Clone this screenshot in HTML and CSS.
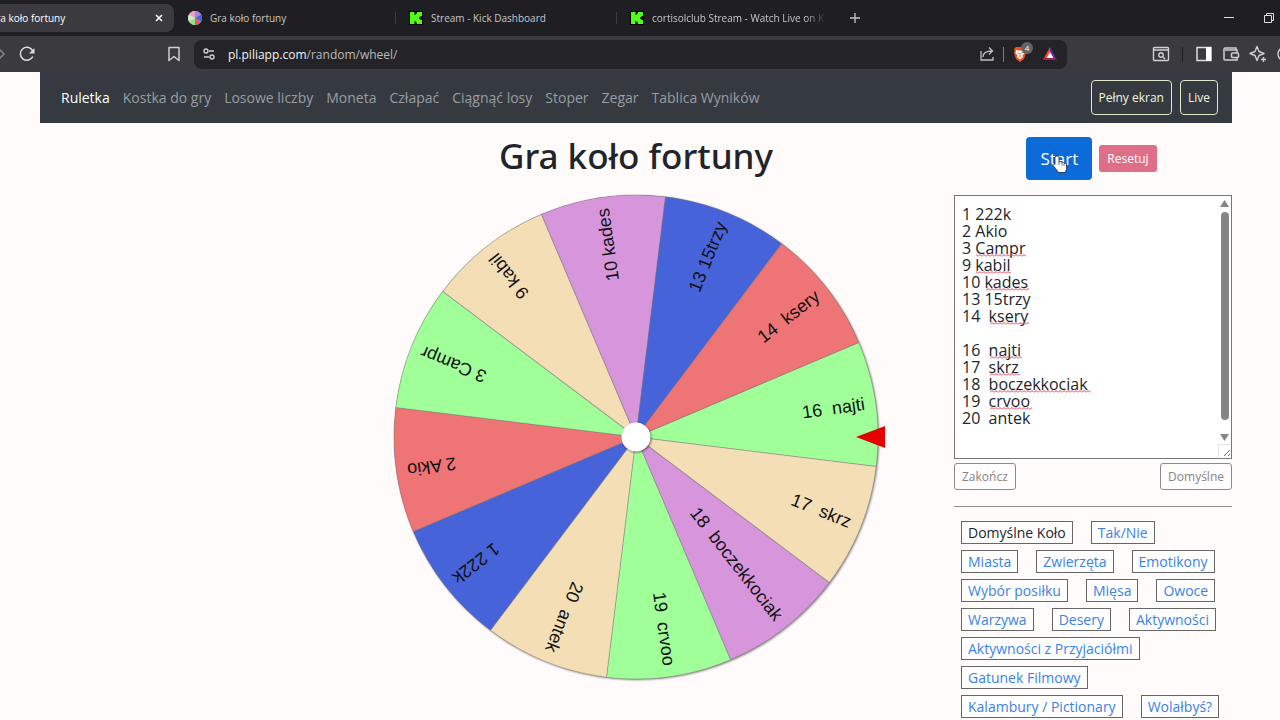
FILE: index.html
```html
<!DOCTYPE html>
<html lang="pl">
<head>
    <meta charset="UTF-8">
    <meta name="viewport" content="width=device-width, initial-scale=1.0">
    <title>Gra koło fortuny</title>
    <link rel="stylesheet" href="styles.css">
</head>
<body>
    <div class="browser">
        <div class="tabs">
            <div class="tab active">
                <svg class="favicon" viewBox="0 0 14 14"><circle cx="7" cy="7" r="7" fill="#d795dc"/></svg>
                <span class="tab-title">Gra koło fortuny</span>
                <button class="tab-close" aria-label="Zamknij kartę">
                    <svg width="8" height="8" viewBox="0 0 8 8"><path d="M1 1l6 6M7 1L1 7" stroke="#fff" stroke-width="1.600"/></svg>
                </button>
            </div>
            <div class="tab">
                <svg class="favicon" viewBox="0 0 14 14">
                    <circle cx="7" cy="7" r="7" fill="#e9c9c9"/>
                    <path d="M7 7L7 0A7 7 0 0 1 13 3.500z" fill="#9b86dd"/>
                    <path d="M7 7L13 3.500A7 7 0 0 1 13 10.500z" fill="#4663da"/>
                    <path d="M7 7L13 10.500A7 7 0 0 1 7 14z" fill="#e8575f"/>
                    <path d="M7 7L7 14A7 7 0 0 1 1 10.500z" fill="#8fe08e"/>
                    <path d="M7 7L1 10.500A7 7 0 0 1 1 3.500z" fill="#c9f0b8"/>
                    <path d="M7 7L1 3.500A7 7 0 0 1 7 0z" fill="#ee9fc8"/>
                </svg>
                <span class="tab-title">Gra koło fortuny</span>
            </div>
            <div class="tab">
                <svg class="favicon" viewBox="0 0 14 14"><rect width="14" height="14" fill="#000"/><path d="M1 1h4.500v3h1V2.500H8V1h5v4h-1.500v1.200H10v1.600h1.500V9H13v4H8v-1.500H6.500V10h-1v3H1z" fill="#53fc18"/></svg>
                <span class="tab-title">Stream - Kick Dashboard</span>
            </div>
            <div class="tab">
                <svg class="favicon" viewBox="0 0 14 14"><rect width="14" height="14" fill="#000"/><path d="M1 1h4.500v3h1V2.500H8V1h5v4h-1.500v1.200H10v1.600h1.500V9H13v4H8v-1.500H6.500V10h-1v3H1z" fill="#53fc18"/></svg>
                <span class="tab-title fade">cortisolclub Stream - Watch Live on K</span>
            </div>
            <button class="new-tab" aria-label="Nowa karta">
                <svg width="12" height="12" viewBox="0 0 12 12"><path d="M6 1v10M1 6h10" stroke="#c8c8cb" stroke-width="1.300"/></svg>
            </button>
            <div class="window-buttons">
                <button aria-label="Minimalizuj"><svg width="12" height="12" viewBox="0 0 12 12"><path d="M1 5.500h10" stroke="#ddd"/></svg></button>
                <button aria-label="Przywróć"><svg width="12" height="12" viewBox="0 0 12 12"><path d="M1.500 3.500h7v7h-7zM3.500 3V1.500h7v7H9" fill="none" stroke="#ddd"/></svg></button>
            </div>
        </div>
        <div class="toolbar">
            <button class="forward" aria-label="Dalej"><svg width="10" height="16" viewBox="0 0 10 16"><path d="M3 3l5 5-5 5" fill="none" stroke="#88888c" stroke-width="1.500"/></svg></button>
            <button class="reload" aria-label="Odśwież"><svg width="18" height="18" viewBox="0 0 18 18"><path d="M14.500 5.500A6.500 6.500 0 1 0 14.800 11.500" fill="none" stroke="#ddd" stroke-width="1.500"/><path d="M16.500 3v5.500h-5.500z" fill="#ddd"/></svg></button>
            <button class="bookmark" aria-label="Zakładka"><svg width="14" height="18" viewBox="0 0 14 18"><path d="M2 2.500h10v13l-5-4-5 4z" fill="none" stroke="#d0d0d3" stroke-width="1.500" stroke-linejoin="round"/></svg></button>
            <div class="address">
                <svg width="14" height="14" viewBox="0 0 14 14" fill="none" stroke="#d0d0d3" stroke-width="1.400"><circle cx="4" cy="4" r="2"/><path d="M7 4h5M2 10h5"/><circle cx="10" cy="10" r="2"/></svg>
                <span class="url">pl.piliapp.com<span class="path">/random/wheel/</span></span>
                <svg width="16" height="16" viewBox="0 0 16 16" fill="none" stroke="#c0c0c3" stroke-width="1.300"><path d="M2 5v9h12v-3M4 11c0-4 3-6 9-6M10 1.500L13.500 5 10 8.500"/></svg>
                <span class="divider light"></span>
                <span class="shield">
                    <svg width="16" height="16" viewBox="0 0 16 16"><path d="M4 1h8l2 2-.5 2 .5 2-2 6-4 3-4-3-2-6 .5-2L2 3z" fill="#f0501e"/><path d="M4 4l2 .5h4l2-.5.5 3-2 2.500.5 1.500-3 2.500L5 11l.5-1.500-2-2.500z" fill="#fff"/><path d="M5 6.500l2 1M11 6.500l-2 1M8 7v3M6.500 11.500L8 10.500l1.500 1" stroke="#f0501e" stroke-width=".8" fill="none"/></svg>
                    <span class="badge">4</span>
                </span>
                <svg width="16" height="16" viewBox="0 0 16 16"><path d="M8 1L1 14l7-5z" fill="#ff4724"/><path d="M1 14h14l-7-5z" fill="#9e1f63"/><path d="M8 1l7 13-7-5z" fill="#662d91"/><path d="M8 6l-3.500 6h7z" fill="#fff"/></svg>
            </div>
            <div class="actions">
                <svg width="18" height="18" viewBox="0 0 18 18" fill="none" stroke="#d0d0d3" stroke-width="1.400"><rect x="1.500" y="2.500" width="15" height="13" rx="1"/><path d="M2 5h14M11 12l2 2"/><circle cx="9" cy="10" r="2.200"/></svg>
                <span class="divider"></span>
                <svg width="18" height="18" viewBox="0 0 18 18"><rect x="2" y="2.500" width="14" height="13" fill="none" stroke="#e0e0e2" stroke-width="1.500"/><path d="M11 2h5v14h-5z" fill="#fff"/></svg>
                <svg width="18" height="18" viewBox="0 0 18 18" fill="none" stroke="#d0d0d3" stroke-width="1.500"><path d="M14 5V3H3a1.500 1.500 0 0 0-1 2v9a1 1 0 0 0 1 1h12V5H3"/><rect x="9.500" y="8" width="7" height="4.500" rx="1" fill="#3b3a3f"/></svg>
                <svg width="18" height="18" viewBox="0 0 18 18" fill="none" stroke="#d0d0d3" stroke-width="1.400" stroke-linejoin="round"><path d="M8 1.500l2 5 5 2-5 2-2 5-2-5-5-2 5-2zM14.500 12v5M12 14.500h5"/></svg>
                <svg width="18" height="18" viewBox="0 0 18 18" fill="none" stroke="#d0d0d3" stroke-width="1.400"><circle cx="9" cy="9" r="7"/></svg>
            </div>
        </div>
    </div>

    <div class="container">
        <nav class="navbar">
            <a class="current" href="#">Ruletka</a>
            <a href="#">Kostka do gry</a>
            <a href="#">Losowe liczby</a>
            <a href="#">Moneta</a>
            <a href="#">Człapać</a>
            <a href="#">Ciągnąć losy</a>
            <a href="#">Stoper</a>
            <a href="#">Zegar</a>
            <a href="#">Tablica Wyników</a>
            <div class="nav-buttons">
                <button>Pełny ekran</button>
                <button>Live</button>
            </div>
        </nav>

        <main class="main">
            <section class="game">
                <h1>Gra koło fortuny</h1>
                <svg class="wheel" viewBox="-250 -250 500 500">
                    <defs>
                        <path id="slice" d="M0 0L233.750-62.630A242 242 0 0 1 233.750 62.630z"/>
                    </defs>
                    <circle class="disc" r="242"/>
                    <g transform="rotate(-8)"><use href="#slice" fill="#a0ff98"/><text x="231" y="-1">16  najti</text></g>
                    <g transform="rotate(22)"><use href="#slice" fill="#f3deb5"/><text x="231" y="-1">17  skrz</text></g>
                    <g transform="rotate(52)"><use href="#slice" fill="#d795dc"/><text x="231" y="-1">18  boczekkociak</text></g>
                    <g transform="rotate(82)"><use href="#slice" fill="#a0ff98"/><text x="231" y="-1">19  crvoo</text></g>
                    <g transform="rotate(112)"><use href="#slice" fill="#f3deb5"/><text x="231" y="-1">20  antek</text></g>
                    <g transform="rotate(142)"><use href="#slice" fill="#4663da"/><text x="231" y="-1">1 222k</text></g>
                    <g transform="rotate(172)"><use href="#slice" fill="#ef7476"/><text x="231" y="-1">2 Akio</text></g>
                    <g transform="rotate(202)"><use href="#slice" fill="#a0ff98"/><text x="231" y="-1">3 Campr</text></g>
                    <g transform="rotate(232)"><use href="#slice" fill="#f3deb5"/><text x="231" y="-1">9 kabil</text></g>
                    <g transform="rotate(262)"><use href="#slice" fill="#d795dc"/><text x="231" y="-1">10 kades</text></g>
                    <g transform="rotate(292)"><use href="#slice" fill="#4663da"/><text x="231" y="-1">13 15trzy</text></g>
                    <g transform="rotate(322)"><use href="#slice" fill="#ef7476"/><text x="231" y="-1">14  ksery</text></g>
                    <circle class="hub" r="14.500"/>
                    <path class="pointer" d="M220 0L249-11V11z"/>
                </svg>
            </section>

            <aside class="side">
                <div class="controls">
                    <button class="start">Start
                        <svg class="hand" width="16" height="20" viewBox="0 0 16 20"><path d="M5 2c1.500 0 2 .7 2 2v4l1-.5c1 0 1.500.5 2 1 1-.3 1.700.1 2 .8 1.500-.3 2.500.4 2.500 1.700v3.500c0 1.500-1 2-1 4H6c0-1.500-1.500-2.500-2.500-4L1 11.500c-.5-1 1-2 2-1V4c0-1.300.5-2 2-2z" fill="#fff" stroke="#223" stroke-width=".8"/><path d="M7 8v3M10 9v2.500M12 10v2" stroke="#445" stroke-width=".8"/></svg>
                    </button>
                    <button class="reset">Resetuj</button>
                </div>
                <div class="editor">
                    <textarea class="names" aria-label="Lista" spellcheck="false">1 222k
2 Akio
3 Campr
9 kabil
10 kades
13 15trzy
14  ksery

16  najti
17  skrz
18  boczekkociak
19  crvoo
20  antek</textarea>
                    <svg class="marks" width="278" height="264" viewBox="0 0 278 264">
                        <defs>
                            <!-- one tile per text line, wave under the baseline -->
                            <pattern id="wave" y="11" width="4" height="17" patternUnits="userSpaceOnUse"><path d="M0 16.500L2 14.500L4 16.500" fill="none" stroke="#dc3a56"/></pattern>
                        </defs>
                        <g fill="url(#wave)">
                            <rect x="22" y="45" width="50" height="17"/>
                            <rect x="22" y="62" width="35" height="17"/>
                            <rect x="32" y="79" width="43" height="17"/>
                            <rect x="36" y="113" width="39" height="17"/>
                            <rect x="36" y="147" width="32" height="17"/>
                            <rect x="36" y="164" width="30" height="17"/>
                            <rect x="36" y="181" width="101" height="17"/>
                            <rect x="36" y="198" width="42" height="17"/>
                        </g>
                        <path d="M266 12l4.500-7 4.500 7zM266 239l4.500 7 4.500-7z" fill="#858585"/>
                        <rect x="267" y="17" width="8" height="208" rx="4" fill="#858585"/>
                        <path d="M264.500 263v-13.500H277" fill="none" stroke="#e3e3e3"/>
                        <path d="M270 261l6-6M274 261l2-2" stroke="#777"/>
                    </svg>
                </div>
                <div class="editor-buttons">
                    <button>Zakończ</button>
                    <button>Domyślne</button>
                </div>
                <div class="presets">
                    <a class="chosen" href="#">Domyślne Koło</a>
                    <a href="#">Tak/Nie</a>
                    <a href="#">Miasta</a>
                    <a href="#">Zwierzęta</a>
                    <a href="#">Emotikony</a>
                    <a href="#">Wybór posiłku</a>
                    <a href="#">Mięsa</a>
                    <a href="#">Owoce</a>
                    <a href="#">Warzywa</a>
                    <a href="#">Desery</a>
                    <a href="#">Aktywności</a>
                    <a href="#">Aktywności z Przyjaciółmi</a>
                    <a href="#">Gatunek Filmowy</a>
                    <a href="#">Kalambury / Pictionary</a>
                    <a href="#">Wolałbyś?</a>
                </div>
            </aside>
        </main>
    </div>
</body>
</html>
```
FILE: styles.css
```css
* {
    box-sizing: border-box;
}
body {
    margin: 0;
    font-family: "Open Sans", "Noto Sans", sans-serif;
    font-size: 14px;
    color: #212529;
    background: #fffbfa;
    overflow: hidden;
}
button {
    font-family: inherit;
    cursor: pointer;
}
a {
    text-decoration: none;
}

/* browser window */
.browser {
    color: #c8c8cb;
    background: #1f1e22;
}
.browser button {
    display: flex;
    padding: 0;
    border: none;
    background: none;
}
.tabs {
    display: flex;
    align-items: center;
    height: 36px;
    margin-left: -47px;
}
.tab {
    display: flex;
    align-items: center;
    flex: none;
    gap: 8px;
    width: 221px;
    height: 28px;
    padding: 0 11px 0 14px;
    font-size: 10px;
}
.tab + .tab + .tab {
    background: linear-gradient(#3c3b40, #3c3b40) left center / 1px 12px no-repeat;
}
.tab.active {
    color: #fff;
    background: #3b3a3f;
    border-radius: 8px;
}
.favicon {
    flex: none;
    width: 14px;
    height: 14px;
}
.tab-title {
    flex: 1;
    overflow: hidden;
    white-space: nowrap;
}
.fade {
    -webkit-mask-image: linear-gradient(to right, #000 88%, transparent);
    mask-image: linear-gradient(to right, #000 88%, transparent);
}
.new-tab {
    margin-left: 12px;
}
.window-buttons {
    display: flex;
    gap: 28px;
    margin-left: auto;
    padding-right: 5px;
}
.toolbar {
    display: flex;
    align-items: center;
    height: 36px;
    background: #3b3a3f;
}
.forward {
    margin-left: -4px;
}
.reload {
    margin-left: 12px;
}
.bookmark {
    margin-left: 131px;
}
.address {
    display: flex;
    flex: 1;
    align-items: center;
    gap: 12px;
    height: 29px;
    margin-left: 13px;
    padding: 0 9px 0 8px;
    border-radius: 8px;
    background: #242327;
}
.url {
    flex: 1;
    font-size: 12px;
    color: #f1f1f3;
}
.path {
    color: #b9b9bd;
}
.divider {
    width: 1px;
    height: 15px;
    background: #1f1e22;
}
.light {
    margin: 0 -4px;
    background: #7b7b80;
}
.shield {
    position: relative;
    display: flex;
    margin-right: 2px;
}
.badge {
    position: absolute;
    top: -4px;
    right: -5px;
    width: 12px;
    border-radius: 6px;
    font-size: 8px;
    line-height: 12px;
    text-align: center;
    color: #fff;
    background: #63636c;
}
.actions {
    display: flex;
    align-items: center;
    gap: 9px;
    margin-left: 85px;
    margin-right: -14px;
}
.actions .divider {
    margin: 0 3px;
}

/* page */
.container {
    margin: 0 48px 0 40px;
}
.navbar {
    display: flex;
    align-items: center;
    gap: 13px;
    height: 51px;
    padding: 0 14px 0 21px;
    background: #343a40;
}
.navbar a {
    color: #999da0;
}
.navbar .current {
    color: #fff;
}
.nav-buttons {
    display: flex;
    gap: 8px;
    margin-left: auto;
}
.nav-buttons button {
    height: 35px;
    padding: 0 7px;
    border: 1px solid #dfe8c8;
    border-radius: 4px;
    font-size: 12px;
    color: #f4f7df;
    background: transparent;
}
.main {
    display: grid;
    grid-template-columns: 278px 1fr 278px;
}
.game {
    grid-column: 2;
    display: flex;
    flex-direction: column;
    align-items: center;
}
.game h1 {
    margin: 8px 0 6px;
    font-family: "Noto Sans", "Open Sans", sans-serif;
    font-size: 35px;
    font-weight: 500;
    line-height: 50px;
}
.wheel {
    width: 500px;
    height: 500px;
}
.wheel use {
    stroke: #77777a;
    stroke-opacity: 0.4;
    stroke-width: 1px;
}
.wheel text {
    font-family: "Liberation Sans", Arial, sans-serif;
    font-size: 18px;
    fill: #111;
    text-anchor: end;
    dominant-baseline: central;
    white-space: pre;
}
.disc {
    fill: #777;
    filter: drop-shadow(1px 1px 1px rgba(0, 0, 0, 0.5));
}
.hub {
    fill: #fff;
    filter: drop-shadow(1px 1px 1px rgba(0, 0, 0, 0.5));
}
.pointer {
    fill: #e60000;
}
.controls {
    display: flex;
    align-items: center;
    justify-content: center;
    gap: 7px;
    height: 43px;
    margin: 14px 3px 15px 0;
}
.start {
    position: relative;
    height: 43px;
    padding: 0 14px;
    border: none;
    border-radius: 4px;
    font-size: 17px;
    color: #fff;
    background: #0b6bd8;
}
.hand {
    position: absolute;
    top: 17px;
    left: 26px;
}
.reset {
    height: 27px;
    padding: 0 8px;
    border: none;
    border-radius: 3px;
    font-size: 12px;
    color: #fff;
    background: #df6f88;
}
.editor {
    position: relative;
    height: 264px;
}
.names {
    display: block;
    width: 100%;
    height: 100%;
    padding: 10px 20px 8px 7px;
    border: 1px solid #777;
    font-family: inherit;
    font-size: 16px;
    line-height: 17px;
    color: #212529;
    background: #fff;
    resize: none;
    overflow: hidden;
}
.marks {
    position: absolute;
    top: 0;
    left: 0;
    pointer-events: none;
}
.editor-buttons {
    display: flex;
    justify-content: space-between;
    padding: 4px 0 16px;
    border-bottom: 1px solid #8d8b8b;
}
.editor-buttons button {
    height: 27px;
    padding: 0 7px;
    border: 1px solid #8a8a8a;
    border-radius: 3px;
    font-size: 12px;
    color: #858585;
    background: #fffdfd;
}
.presets {
    display: flex;
    flex-wrap: wrap;
    gap: 6px 18px;
    padding: 14px 8px 0 7px;
}
.presets a {
    padding: 0 6px;
    border: 1px solid #666;
    line-height: 21px;
    color: #3b82e6;
    background: #fffefe;
}
.presets .chosen {
    color: #212529;
}
```
